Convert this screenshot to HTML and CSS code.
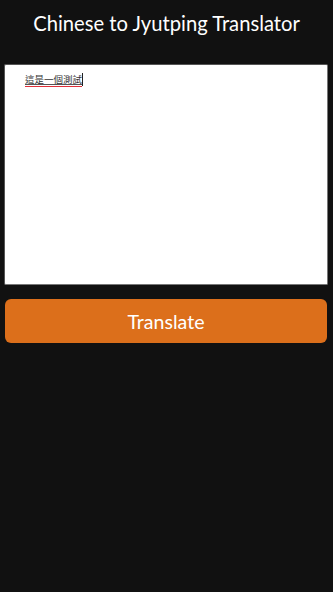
FILE: index.html
```html
<!DOCTYPE html>
<html lang="en">
<head>
<meta charset="utf-8">
<title>Chinese to Jyutping Translator</title>
<link rel="stylesheet" href="styles.css">
</head>
<body>
<main class="app">
  <h1 class="title">Chinese to Jyutping Translator</h1>
  <div class="input-box">
    <p class="input-text"><span class="misspelled">這是一個測試</span><span class="caret"></span></p>
  </div>
  <button class="translate-btn" type="button">Translate</button>
</main>
</body>
</html>
```

FILE: styles.css
```css
html, body {
  margin: 0;
  padding: 0;
  background: #111111;
  height: 100%;
}
.app {
  display: flex;
  flex-direction: column;
  font-family: "Lato", "Open Sans", sans-serif;
}
.title {
  margin: 0;
  padding: 8px 0 0;
  height: 56px;
  box-sizing: border-box;
  text-align: center;
  color: #ffffff;
  font-weight: 400;
  font-size: 20.2px;
  line-height: 30px;
}
.input-box {
  margin: 8px 5px 0 4px;
  height: 221px;
  box-sizing: border-box;
  background: #ffffff;
  border: 1px solid #777777;
  border-top-color: #555;
  border-left-color: #555;
  border-radius: 2px;
  padding: 8px 20px;
}
.input-text {
  margin: 0;
  font-family: "Noto Sans CJK TC", "Noto Sans CJK SC", sans-serif;
  font-size: 9.5px;
  line-height: 14px;
  color: #333333;
  display: flex;
  align-items: flex-start;
}
.misspelled {
  text-decoration: underline #555555;
  text-decoration-thickness: 1px;
  text-underline-offset: 1px;
  border-bottom: 1px solid #e0303a;
  line-height: 12px;
  padding-bottom: 1px;
}
.caret {
  display: inline-block;
  width: 1px;
  height: 13px;
  background: #222222;
}
.translate-btn {
  margin: 14px 6px 0 5px;
  height: 44px;
  border: none;
  border-radius: 6px;
  background: #dc6f1b;
  color: #ffffff;
  font-family: "Lato", "Open Sans", sans-serif;
  font-size: 19.6px;
  padding: 0;
}
```
